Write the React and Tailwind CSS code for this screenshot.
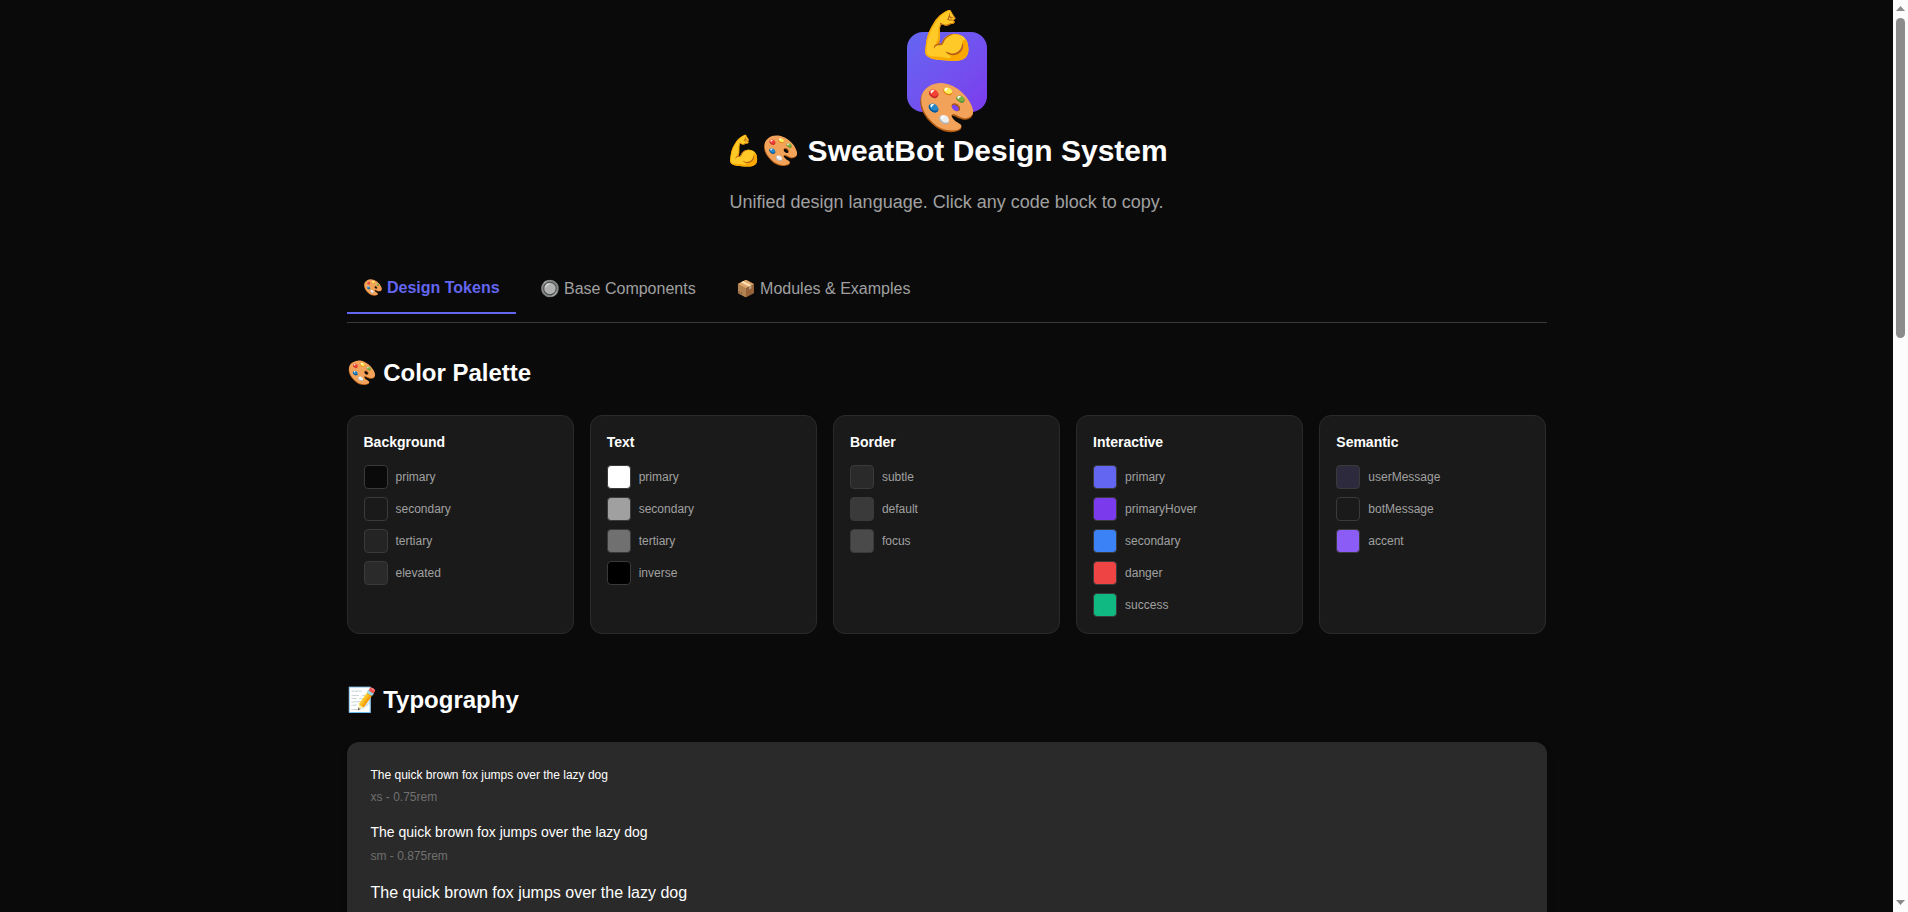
import { useState } from 'react';

const TABS = ['🎨 Design Tokens', '🔘 Base Components', '📦 Modules & Examples'];

const PALETTE = [
  {
    title: 'Background',
    colors: [
      ['primary', 'bg-[#0a0a0a]'],
      ['secondary', 'bg-[#1a1a1a]'],
      ['tertiary', 'bg-[#242424]'],
      ['elevated', 'bg-[#2a2a2a]'],
    ],
  },
  {
    title: 'Text',
    colors: [
      ['primary', 'bg-white'],
      ['secondary', 'bg-[#a0a0a0]'],
      ['tertiary', 'bg-[#707070]'],
      ['inverse', 'bg-black'],
    ],
  },
  {
    title: 'Border',
    colors: [
      ['subtle', 'bg-[#2a2a2a]'],
      ['default', 'bg-[#3a3a3a]'],
      ['focus', 'bg-[#4a4a4a]'],
    ],
  },
  {
    title: 'Interactive',
    colors: [
      ['primary', 'bg-[#6366f1]'],
      ['primaryHover', 'bg-[#7c3aed]'],
      ['secondary', 'bg-[#3b82f6]'],
      ['danger', 'bg-[#ef4444]'],
      ['success', 'bg-[#10b981]'],
    ],
  },
  {
    title: 'Semantic',
    colors: [
      ['userMessage', 'bg-[#2d2a3d]'],
      ['botMessage', 'bg-[#1a1a1a]'],
      ['accent', 'bg-[#8b5cf6]'],
    ],
  },
];

const TYPE_SCALE = [
  ['xs - 0.75rem', 'text-[12px]'],
  ['sm - 0.875rem', 'text-[14px]'],
  ['base - 1rem', 'text-[16px]'],
];

function Header() {
  return (
    <header className="mb-12 flex flex-col items-center text-center">
      <div className="mb-4 flex size-20 items-center justify-center rounded-2xl bg-linear-135 from-[#6366f1] to-[#7c3aed] text-[48px] leading-[72px]">
        💪🎨
      </div>
      <h1 className="mb-4 text-[30px] leading-[45px] font-bold text-white">💪🎨 SweatBot Design System</h1>
      <p className="text-[18px] leading-[27px] text-[#a0a0a0]">
        Unified design language. Click any code block to copy.
      </p>
    </header>
  );
}

function Tabs() {
  const [active, setActive] = useState(0);
  return (
    <nav className="mb-8 flex gap-2 border-b border-[#3a3a3a] pb-2">
      {TABS.map((tab, i) => (
        <button
          key={tab}
          type="button"
          onClick={() => setActive(i)}
          className={
            i === active
              ? 'cursor-pointer border-b-2 border-[#6366f1] px-4 py-3 text-[16px] leading-6 font-bold text-[#6366f1]'
              : 'cursor-pointer px-4 py-3 text-[16px] leading-6 text-[#a0a0a0]'
          }
        >
          {tab}
        </button>
      ))}
    </nav>
  );
}

function PaletteCard({ title, colors }) {
  return (
    <div className="rounded-xl border border-[#2a2a2a] bg-[#1a1a1a] p-4">
      <h3 className="mb-3 text-[14px] leading-[21px] font-bold text-white">{title}</h3>
      <ul className="flex flex-col gap-2">
        {colors.map(([name, fill]) => (
          <li key={name} className="flex items-center gap-2">
            <span className={`size-6 shrink-0 rounded border border-[#3a3a3a] ${fill}`} />
            <span className="text-[12px] leading-[18px] text-[#a0a0a0]">{name}</span>
          </li>
        ))}
      </ul>
    </div>
  );
}

function Scrollbar() {
  return (
    <div aria-hidden="true" className="flex w-[15px] shrink-0 flex-col items-center bg-[#fcfcfc]">
      <svg className="h-[18px] w-[15px] shrink-0" viewBox="0 0 15 18" fill="#8b8b8b">
        <path d="M7.5 6 12 11H3z" />
      </svg>
      <div className="h-[320px] w-[9px] rounded-full bg-[#8b8b8b]" />
      <svg className="mt-auto h-[15px] w-[15px] shrink-0" viewBox="0 0 15 15" fill="#8b8b8b">
        <path d="M7.5 8 12 3H3z" />
      </svg>
    </div>
  );
}

export default function App() {
  return (
    <div className="flex h-screen overflow-hidden bg-[#0a0a0a] font-['Liberation_Sans',Arial,sans-serif]">
      <main className="min-w-0 flex-1 overflow-y-auto [scrollbar-width:none]">
        <div className="mx-auto w-full max-w-[1200px] py-8">
          <Header />
          <Tabs />
          <section className="mb-12">
            <h2 className="mb-6 text-[24px] leading-9 font-bold text-white">🎨 Color Palette</h2>
            <div className="grid grid-cols-5 gap-4">
              {PALETTE.map((group) => (
                <PaletteCard key={group.title} {...group} />
              ))}
            </div>
          </section>
          <section>
            <h2 className="mb-6 text-[24px] leading-9 font-bold text-white">📝 Typography</h2>
            <div className="flex flex-col gap-4 rounded-xl bg-[#2a2a2a] p-6 shadow-[0_4px_6px_rgba(0,0,0,0.3)]">
              {TYPE_SCALE.map(([label, size]) => (
                <div key={label} className="flex flex-col gap-1">
                  <p className={`leading-[1.5] text-white ${size}`}>The quick brown fox jumps over the lazy dog</p>
                  <p className="text-[12px] leading-[18px] text-[#707070]">{label}</p>
                </div>
              ))}
            </div>
          </section>
        </div>
      </main>
      <Scrollbar />
    </div>
  );
}
